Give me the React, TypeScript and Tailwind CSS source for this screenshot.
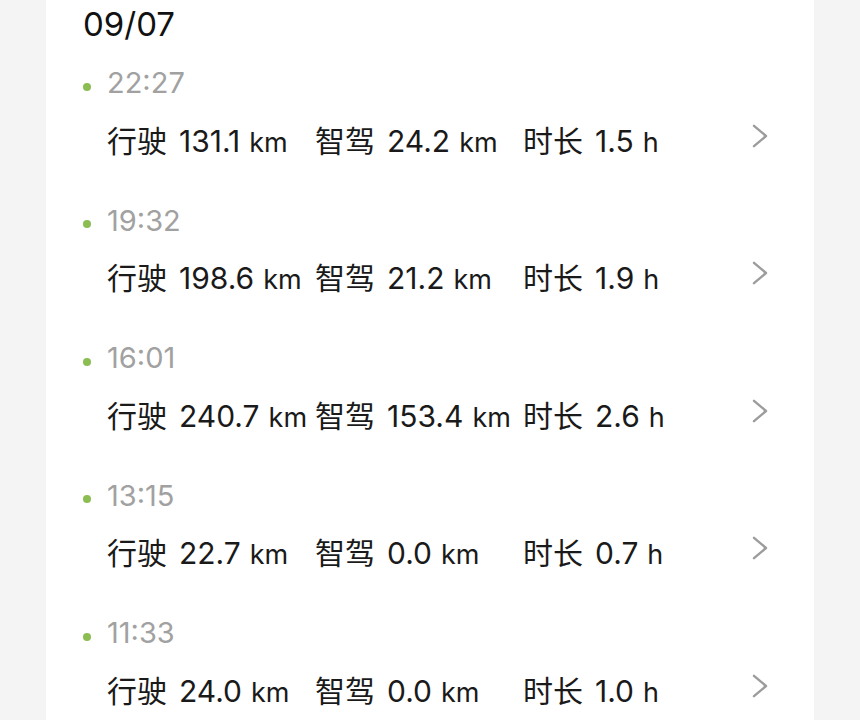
import React from "react";

type Trip = { time: string; drive: string; smart: string; dur: string };

const trips: Trip[] = [
  { time: "22:27", drive: "131.1", smart: "24.2", dur: "1.5" },
  { time: "19:32", drive: "198.6", smart: "21.2", dur: "1.9" },
  { time: "16:01", drive: "240.7", smart: "153.4", dur: "2.6" },
  { time: "13:15", drive: "22.7", smart: "0.0", dur: "0.7" },
  { time: "11:33", drive: "24.0", smart: "0.0", dur: "1.0" },
];

function Stat({ label, value, unit, last }: { label: string; value: string; unit: string; last?: boolean }) {
  return (
    <div className={last ? "flex items-baseline whitespace-nowrap" : "flex items-baseline whitespace-nowrap min-w-[200px] mr-[8px]"}>
      <span className="text-[30px]">{label}</span>
      <span className="text-[30px] ml-[12px]">{value}</span>
      <span className="text-[27px] ml-[9px]">{unit}</span>
    </div>
  );
}

function Chevron() {
  return (
    <svg width="16" height="24" viewBox="0 0 16 24" className="mb-[11px] shrink-0">
      <path d="M2 1.8 L14 12 L2 22.2" fill="none" stroke="#9c9c9c" strokeWidth="2.4" strokeLinecap="round" strokeLinejoin="round" />
    </svg>
  );
}

export default function App() {
  return (
    <div
      className="min-h-screen bg-[#f4f4f4]"
      style={{ fontFamily: "Inter, 'Noto Sans CJK SC', sans-serif" }}
    >
      <div className="mx-auto w-[768px] min-h-[720px] bg-white pl-[37px] pr-[46px]">
        <div className="h-[63px] pt-[4px]">
          <div className="text-[33px] leading-[40px] text-[#111]">09/07</div>
        </div>
        {trips.map((t) => (
          <div key={t.time} className="h-[137.5px]">
            <div className="flex h-[40px] items-center">
              <div className="mt-[7px] h-[8px] w-[8px] rounded-full bg-[#8bbd52]" />
              <span className="ml-[16px] text-[29px] text-[#a1a1a1]">{t.time}</span>
            </div>
            <div className="mt-[18px] flex h-[40px] items-center pl-[24px] text-[#1a1a1a]">
              <div className="flex flex-1 items-center">
                <Stat label="行驶" value={t.drive} unit="km" />
                <Stat label="智驾" value={t.smart} unit="km" />
                <Stat label="时长" value={t.dur} unit="h" last />
              </div>
              <Chevron />
            </div>
          </div>
        ))}
      </div>
    </div>
  );
}
